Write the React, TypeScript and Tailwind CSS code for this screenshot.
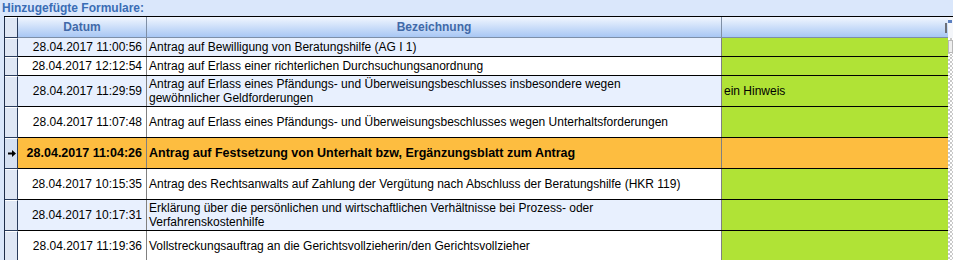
import React from "react"

type Row = {
  date: string
  name: React.ReactNode
  tall: boolean
  alt: boolean
  note?: string
  selected?: boolean
}

const rows: Row[] = [
  { date: "28.04.2017 11:00:56", name: "Antrag auf Bewilligung von Beratungshilfe (AG I 1)", tall: false, alt: true },
  { date: "28.04.2017 12:12:54", name: "Antrag auf Erlass einer richterlichen Durchsuchungsanordnung", tall: false, alt: false },
  {
    date: "28.04.2017 11:29:59",
    name: (
      <>
        Antrag auf Erlass eines Pfändungs- und Überweisungsbeschlusses insbesondere wegen
        <br />
        gewöhnlicher Geldforderungen
      </>
    ),
    tall: true,
    alt: true,
    note: "ein Hinweis",
  },
  { date: "28.04.2017 11:07:48", name: "Antrag auf Erlass eines Pfändungs- und Überweisungsbeschlusses wegen Unterhaltsforderungen", tall: true, alt: false },
  { date: "28.04.2017 11:04:26", name: "Antrag auf Festsetzung von Unterhalt bzw, Ergänzungsblatt zum Antrag", tall: true, alt: false, selected: true },
  { date: "28.04.2017 10:15:35", name: "Antrag des Rechtsanwalts auf Zahlung der Vergütung nach Abschluss der Beratungshilfe (HKR 119)", tall: true, alt: false },
  {
    date: "28.04.2017 10:17:31",
    name: (
      <>
        Erklärung über die persönlichen und wirtschaftlichen Verhältnisse bei Prozess- oder
        <br />
        Verfahrenskostenhilfe
      </>
    ),
    tall: true,
    alt: true,
  },
  { date: "28.04.2017 11:19:36", name: "Vollstreckungsauftrag an die Gerichtsvollzieherin/den Gerichtsvollzieher", tall: true, alt: false },
]

function Indicator({ selected }: { selected?: boolean }) {
  return (
    <div
      className={`w-[13px] shrink-0 flex items-center justify-center border-t border-t-white border-r border-b border-r-[#2a3c5c] border-b-[#2a3c5c] ${
        selected ? "bg-[#d6e1f2]" : "bg-[#dfe7f5]"
      }`}
    >
      {selected && (
        <svg width="8" height="7" viewBox="0 0 8 7" className="ml-[1px]">
          <path d="M0 2.5h4V0l4 3.5L4 7V4.5H0z" fill="#000" />
        </svg>
      )}
    </div>
  )
}

export default function App() {
  return (
    <div
      className="w-[953px] h-[260px] overflow-hidden bg-[#dae7fb] text-black"
      style={{ fontFamily: '"Liberation Sans", Arial, sans-serif' }}
    >
      {/* Title */}
      <div className="h-[16px] pl-[2px] pt-[1px] text-[12px] leading-[14px] font-bold text-[#3a6db5]">
        Hinzugefügte Formulare:
      </div>

      {/* Table */}
      <div className="ml-[4px] border-t border-black flex flex-col">
        {/* Header */}
        <div className="flex h-[21px]">
          <div className="border-l border-[#1e2d4a] flex">
            <Indicator />
          </div>
          <div className="flex border-b border-[#7d8fa8] bg-gradient-to-b from-[#f1f6fe] to-[#a8c7f4] text-[12px] font-bold text-[#4169a8]">
            <div className="w-[129px] border-r border-[#7f8fa6] flex items-center justify-center">Datum</div>
            <div className="w-[575px] border-r border-[#7f8fa6] flex items-center justify-center">Bezeichnung</div>
            <div className="w-[226px] flex items-center justify-end">
              <div className="w-[2px] h-[10px] bg-[#6b6f78] mr-[1px] mt-[2px]" />
            </div>
          </div>
          <div className="w-[5px] flex flex-col bg-[#f4f6fa]">
            <div className="mt-[3px] h-[3px] w-[4px] bg-[#5b7fc0]" />
          </div>
        </div>

        {/* Body */}
        {rows.map((r, i) => {
          const base = r.selected ? "bg-[#fdbd40]" : r.alt ? "bg-[#e8f0fe]" : "bg-white"
          const green = r.selected ? "bg-[#fdbd40]" : "bg-[#b0e336]"
          return (
            <div key={i} className={`flex ${r.tall ? "h-[31px]" : "h-[19px]"}`}>
              <div className="border-l border-[#1e2d4a] flex">
                <Indicator selected={r.selected} />
              </div>
              <div
                className={`flex border-b border-black ${
                  r.selected ? "text-[12.5px] font-bold" : "text-[12px]"
                }`}
              >
                <div className={`w-[129px] border-r border-[#808080] flex items-center justify-end pr-[4px] ${base}`}>
                  {r.date}
                </div>
                <div className={`w-[575px] border-r border-[#808080] flex items-center pl-[2px] leading-[14px] ${base}`}>
                  <span>{r.name}</span>
                </div>
                <div className={`w-[226px] flex items-center pl-[2px] ${green}`}>{r.note}</div>
              </div>
              <div className="w-[5px] bg-[repeating-conic-gradient(#c8c8c8_0_25%,#ffffff_0_50%)] bg-[length:4px_4px]">
                {i === 0 && <div className="mt-[2px] h-[13px] w-[5px] border border-[#b8b8b8] bg-[#eeeeee]" />}
              </div>
            </div>
          )
        })}
      </div>
    </div>
  )
}
